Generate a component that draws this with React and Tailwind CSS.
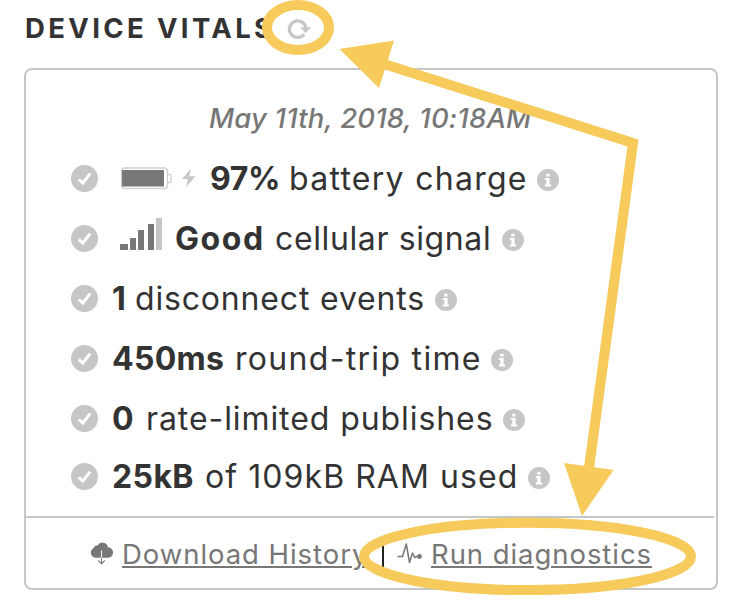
import React from "react";

const Check = () => (
  <svg viewBox="0 0 27 27" className="h-[27px] w-[27px] shrink-0">
    <circle cx="13.5" cy="13.5" r="13.5" fill="#c6c6c6" />
    <path d="M7.8 14.4 L11.8 18 L19.2 8.6" fill="none" stroke="#fff" strokeWidth="3" />
  </svg>
);

const Info = () => (
  <svg viewBox="0 0 22 22" className="mt-1 h-[22px] w-[22px] shrink-0">
    <circle cx="11" cy="11" r="11" fill="#c6c6c6" />
    <path d="M9.2 4.8h3.3v2.8H9.2z M7.8 9h4.8v6.4h1.5v2H7.8v-2h1.5v-4.4H7.8z" fill="#fff" />
  </svg>
);

const Battery = () => (
  <svg viewBox="0 0 76 24" className="h-6 w-[76px] shrink-0">
    <rect x="1.5" y="2" width="46" height="20.5" rx="3" fill="#fff" stroke="#cfcfcf" strokeWidth="1.4" />
    <path d="M48 8.5h1.8a1.2 1.2 0 0 1 1.2 1.2v5.6a1.2 1.2 0 0 1-1.2 1.2H48" fill="#fff" stroke="#cfcfcf" strokeWidth="1.3" />
    <rect x="2" y="4" width="42" height="16.5" fill="#777" />
    <path d="M71 2.5 62 13h6l-2 8L75.5 10.3h-6.2z" fill="#c6c6c6" />
  </svg>
);

const Signal = () => (
  <svg viewBox="0 0 42 32" className="mb-2 h-8 w-[42px] shrink-0" shapeRendering="crispEdges">
    <path d="M0 26h8v6H0zM10 20h6v12h-6zM18 12h6v20h-6zM28 6h6v26h-6z" fill="#777" />
    <path d="M36 0h6v32h-6z" fill="#c6c6c6" />
  </svg>
);

const Row = ({ icon, bold, boldClass, text, textClass, className = "" }) => (
  <div className={`flex h-[60px] items-center pl-[45px] text-[32px] leading-[60px] whitespace-nowrap ${className}`}>
    <Check />
    {icon}
    <b className={`shrink-0 pt-[2px] leading-[58px] font-bold ${boldClass}`}>{bold}</b>
    <span className={`shrink-0 pt-[2px] pl-px leading-[58px] font-normal ${textClass}`}>{text}</span>
    <Info />
  </div>
);

export default function App() {
  return (
    <div className="relative h-[610px] w-[738px] overflow-hidden bg-white pl-6 font-['Inter',sans-serif] text-[#333]">
      <header className="flex h-[68px] items-start pt-[11px]">
        <h1 className="w-[263px] pl-px text-[27.5px] leading-[34px] font-bold tracking-[3.37px] whitespace-nowrap">DEVICE VITALS</h1>
        <svg viewBox="0 0 24 22" className="mt-[6px] h-[22px] w-6">
          <path d="M17.2 17.3A8.3 8.3 0 1 1 18.8 10.5" fill="none" stroke="#c6c6c6" strokeWidth="3.3" />
          <path d="M13 10.3H24.2l-5.6 5.8z" fill="#c6c6c6" />
        </svg>
      </header>

      <section className="flex h-[522px] w-[694px] flex-col rounded-[8px] border-2 border-[#c6c6c6]">
        <div className="h-[446px]">
          <p className="h-[78px] pt-[18px] pl-[183px] text-[27.5px] leading-[60px] font-medium tracking-[0.17px] whitespace-nowrap text-[#777] italic">
            May 11th, 2018, 10:18AM
          </p>
          <Row icon={<div className="ml-[22px] w-[90px]"><Battery /></div>} bold="97%" boldClass="w-[78px] tracking-[-0.4px]" text="battery charge" textClass="w-[249px] tracking-[1.28px]" />
          <Row icon={<div className="ml-[22px] w-[55px]"><Signal /></div>} bold="Good" boldClass="w-[99px] tracking-[1.6px]" text="cellular signal" textClass="w-[228px] tracking-[0.62px]" />
          <Row bold="1" boldClass="ml-[14px] w-[22px]" text="disconnect events" textClass="w-[301px] tracking-[0.83px]" />
          <Row bold="450ms" boldClass="ml-[14px] w-[122px] tracking-[0.3px]" text="round-trip time" textClass="w-[257px] tracking-[1.31px]" />
          <Row bold="0" boldClass="ml-[14px] w-[33px]" text="rate-limited publishes" textClass="w-[358px] tracking-[0.92px]" />
          <Row className="-mt-[2px]" bold="25kB" boldClass="ml-[14px] w-[92px] tracking-[0.4px]" text="of 109kB RAM used" textClass="w-[324px] tracking-[1.07px]" />
        </div>
        <div className="mr-[2px] h-[2px] shrink-0 bg-[#c6c6c6]" />
        <footer className="flex h-[70px] items-center pl-[64px] text-[27.5px] leading-[60px] font-normal whitespace-nowrap text-[#777]">
          <svg viewBox="0 0 23 23" className="h-[23px] w-[23px] shrink-0">
            <path d="M5.5 15.8A5.3 5.3 0 0 1 3.6 5.9 4 4 0 0 1 7.7 3.2 5.6 5.6 0 0 1 18 5.2a5.3 5.3 0 0 1-.5 10.6z" fill="#777" />
            <path d="M11.5 8.5v8" stroke="#fff" strokeWidth="1" />
            <path d="M11.5 16v5.5M8.2 18.5l3.3 3.3 3.3-3.3" fill="none" stroke="#777" strokeWidth="1.1" />
          </svg>
          <a className="ml-[9px] w-[260px] shrink-0 pt-[2px] leading-[58px] tracking-[0.95px]"><span className="underline decoration-2 underline-offset-2">Download History</span></a>
          <i className="mt-1 h-6 w-[2px] shrink-0 bg-[#222]" />
          <svg viewBox="0 0 26 22" className="ml-[13px] h-[22px] w-[26px] shrink-0">
            <path d="M0.5 14.5h5L9.3 2l3.2 18.5 3-9.5 2.2 4.5 2-1h3" fill="none" stroke="#777" strokeWidth="1.5" strokeLinejoin="round" />
            <circle cx="22.5" cy="14.5" r="2.4" fill="#777" />
          </svg>
          <a className="ml-[8px] shrink-0 pt-[2px] leading-[58px] tracking-[0.94px]"><span className="underline decoration-2 underline-offset-2">Run diagnostics</span></a>
        </footer>
      </section>

      <svg viewBox="0 0 738 610" className="pointer-events-none absolute top-0 left-0 h-[610px] w-[738px]">
        <g fill="none" stroke="#f6ca5b" strokeWidth="10">
          <ellipse cx="298" cy="27.5" rx="31" ry="22.5" />
          <ellipse cx="527.5" cy="556.4" rx="163.5" ry="33.7" />
          <path d="M384 64 633 143 589 468" />
        </g>
        <path d="M339.5 49 394 40.5 379 88zM564 463 613.5 470 582 516z" fill="#f6ca5b" />
      </svg>
    </div>
  );
}
